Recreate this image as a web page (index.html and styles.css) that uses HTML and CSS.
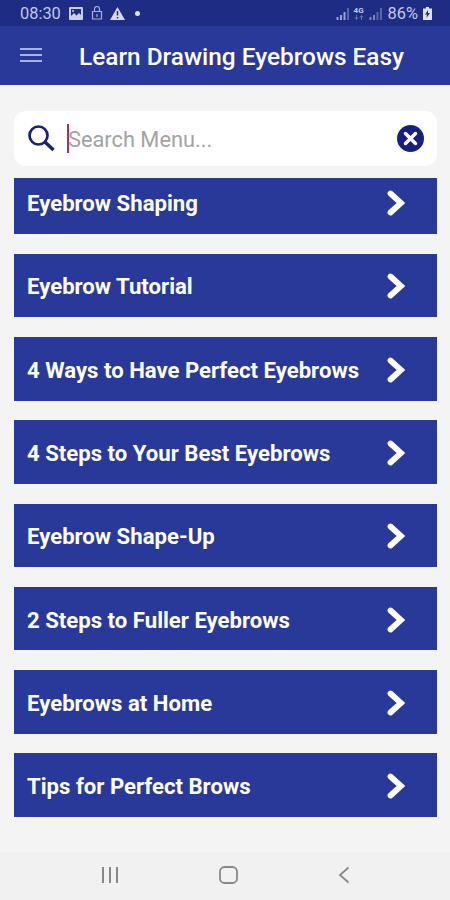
FILE: index.html
```html
<!DOCTYPE html>
<html lang="en">
<head>
  <meta charset="UTF-8" />
  <meta name="viewport" content="width=device-width, initial-scale=1" />
  <title>Learn Drawing Eyebrows Easy</title>
  <link rel="stylesheet" href="styles.css">
</head>
<body>
  <div class="status-bar">
    <span class="time">08:30</span>
    <svg class="picture" width="14" height="13" viewBox="0 0 14 13">
      <path fill="#c9cdec" fill-rule="evenodd" d="M1 0h12a1 1 0 0 1 1 1v11a1 1 0 0 1-1 1H1a1 1 0 0 1-1-1V1a1 1 0 0 1 1-1zM2 2v7l3-3 2.500 2.500L10 6l2 2V2z" />
      <circle cx="4" cy="4" r="1" fill="#c9cdec" />
    </svg>
    <svg class="lock" width="12" height="14" viewBox="0 0 12 14">
      <path fill="none" stroke="#a9afdc" stroke-width="1.200" d="M1.500 5.500h9v7.500h-9zM3.500 5.500V3a2.500 2.500 0 0 1 5 0v2.500M6 8v3" />
    </svg>
    <svg class="warning" width="15" height="13" viewBox="0 0 15 13">
      <path fill="#d5d8f0" d="M7.500 0L15 13H0z" />
      <path stroke="#1f2c83" stroke-width="1.500" d="M7.500 4v4.500M7.500 10v1.500" />
    </svg>
    <span class="dot"></span>
    <div class="status-right">
      <svg width="13" height="13" viewBox="0 0 13 13">
        <path stroke="#9da4d4" stroke-width="2" d="M1.500 13v-3M5 13V8" />
        <path stroke="#9da4d4" stroke-width="2" d="M8.500 13V5" />
        <path stroke="#5a65ad" stroke-width="2" d="M12 13V1" />
      </svg>
      <div class="network">
        <span>4G</span>
        <svg width="10" height="5" viewBox="0 0 10 5">
          <path fill="none" stroke="#6973b5" d="M1 2.500l1.500 2 1.500-2M2.500 0v4M6 2.500l1.500-2 1.500 2M7.500 1v4" />
        </svg>
      </div>
      <svg width="13" height="13" viewBox="0 0 13 13">
        <path stroke="#7d86c1" stroke-width="2" d="M1.500 13v-3M5 13V8" />
        <path stroke="#5a65ad" stroke-width="2" d="M8.500 13V5M12 13V1" />
      </svg>
      <span class="percent">86%</span>
      <svg class="battery" width="9" height="13" viewBox="0 0 9 13">
        <path fill="#e0e3f5" d="M3 0h3v1.500h3V13H0V1.500h3z" />
        <path fill="#1f2c83" d="M5 3L2 7.500h2L3.500 11l3.500-5H5z" />
      </svg>
    </div>
  </div>

  <header class="toolbar">
    <svg class="menu" width="22" height="16" viewBox="0 0 22 16">
      <path stroke="#a9b2e4" stroke-width="2" d="M0 2h22M0 8h22M0 14h22" />
    </svg>
    <h1>Learn Drawing Eyebrows Easy</h1>
  </header>

  <main>
    <div class="search">
      <svg class="glass" width="28" height="28" viewBox="0 0 28 28">
        <g fill="none" stroke="#17207c" stroke-width="2.700">
          <circle cx="11.500" cy="10.500" r="9" />
          <path stroke-width="3.400" d="M18 17l8.500 8" />
        </g>
      </svg>
      <span class="caret"></span>
      <span class="placeholder">Search Menu...</span>
      <svg class="clear" width="28" height="28" viewBox="0 0 28 28">
        <circle cx="14.500" cy="13.500" r="13.500" fill="#17207c" />
        <path stroke="#fff" stroke-width="3.500" stroke-linecap="round" d="M9.500 8.500l10 10M19.500 8.500l-10 10" />
      </svg>
    </div>

    <div class="list">
      <div class="item"><span>Eyebrow Shaping</span><svg class="arrow" viewBox="0 0 18 26"><path d="M3.500 3.500L14 13 3.500 22.500" /></svg></div>
      <div class="item"><span>Eyebrow Tutorial</span><svg class="arrow" viewBox="0 0 18 26"><path d="M3.500 3.500L14 13 3.500 22.500" /></svg></div>
      <div class="item"><span>4 Ways to Have Perfect Eyebrows</span><svg class="arrow" viewBox="0 0 18 26"><path d="M3.500 3.500L14 13 3.500 22.500" /></svg></div>
      <div class="item"><span>4 Steps to Your Best Eyebrows</span><svg class="arrow" viewBox="0 0 18 26"><path d="M3.500 3.500L14 13 3.500 22.500" /></svg></div>
      <div class="item"><span>Eyebrow Shape-Up</span><svg class="arrow" viewBox="0 0 18 26"><path d="M3.500 3.500L14 13 3.500 22.500" /></svg></div>
      <div class="item"><span>2 Steps to Fuller Eyebrows</span><svg class="arrow" viewBox="0 0 18 26"><path d="M3.500 3.500L14 13 3.500 22.500" /></svg></div>
      <div class="item"><span>Eyebrows at Home</span><svg class="arrow" viewBox="0 0 18 26"><path d="M3.500 3.500L14 13 3.500 22.500" /></svg></div>
      <div class="item"><span>Tips for Perfect Brows</span><svg class="arrow" viewBox="0 0 18 26"><path d="M3.500 3.500L14 13 3.500 22.500" /></svg></div>
    </div>
  </main>

  <nav class="nav-bar">
    <svg width="18" height="18" viewBox="0 0 18 18"><path stroke="#888" stroke-width="2" d="M2 1v16M9 1v16M16 1v16" /></svg>
    <svg width="20" height="18" viewBox="0 0 20 18"><rect x="1" y="1" width="17" height="16" rx="4.500" fill="none" stroke="#888" stroke-width="1.800" /></svg>
    <svg width="12" height="18" viewBox="0 0 12 18"><path fill="none" stroke="#888" stroke-width="1.800" d="M10.500 1.500L2 9l8.500 7.500" /></svg>
  </nav>
</body>
</html>
```

FILE: styles.css
```css
* { box-sizing: border-box; }
body {
  margin: 0;
  height: 900px;
  display: flex;
  flex-direction: column;
  overflow: hidden;
  font-family: Roboto, "Liberation Sans", sans-serif;
  background-color: #f4f4f4;
}
svg { display: block; flex-shrink: 0; }

.status-bar {
  height: 26px;
  padding: 0 18px 0 20px;
  display: flex;
  align-items: center;
  background-color: #1f2c83;
  color: #c3c8e8;
  font-size: 16.4px;
}
.time { width: 41px; }
.picture { margin-left: 8px; }
.lock { margin-left: 8px; }
.warning { margin-left: 7px; }
.dot {
  width: 5px;
  height: 5px;
  margin-left: 10px;
  border-radius: 50%;
  background-color: #e0e3f5;
}
.status-right {
  margin-left: auto;
  display: flex;
  align-items: center;
}
.network {
  width: 10px;
  margin: 0 5px 0 5px;
  font-size: 8px;
  line-height: 8px;
  font-weight: bold;
}
.percent { margin-left: 6px; }
.battery { margin-left: 5px; }

.toolbar {
  height: 59px;
  padding: 2px 0 0 20px;
  display: flex;
  align-items: center;
  background-color: #293999;
  color: #fff;
}
.menu { margin-bottom: 4px; }
h1 {
  margin: 0 0 0 37px;
  font-size: 24.4px;
  font-weight: 500;
  white-space: nowrap;
}

main { height: 767px; padding: 26px 13px 0 13.5px; }
.search {
  height: 55px;
  padding: 0 13px;
  display: flex;
  align-items: center;
  background-color: #fff;
  border-radius: 12px;
}
.caret {
  width: 2px;
  height: 29px;
  margin: 0 -1px 0 12.5px;
  background-color: #b02a63;
}
.placeholder {
  padding-top: 1px;
  color: #a3a3a3;
  font-size: 21.8px;
}
.clear { margin-left: auto; }

/* the list is scrolled a little, so its first row is cut off at the top */
.list {
  height: 660px;
  margin-top: 12px;
  overflow: hidden;
}
.item {
  height: 63.5px;
  margin-bottom: 19.8px;
  padding: 2px 32px 0 13.5px;
  display: flex;
  align-items: center;
  justify-content: space-between;
  background-color: #293999;
  color: #fff;
  font-size: 22.15px;
  font-weight: bold;
  white-space: nowrap;
}
.item:first-child { margin-top: -7.6px; }
.arrow { width: 18px; height: 26px; }
.arrow path {
  fill: none;
  stroke: #fff;
  stroke-width: 5.8;
  stroke-linecap: round;
}

.nav-bar {
  height: 48px;
  padding: 0 100px 2px 101px;
  display: flex;
  align-items: center;
  justify-content: space-between;
  background-color: #f1f1f1;
}
```
